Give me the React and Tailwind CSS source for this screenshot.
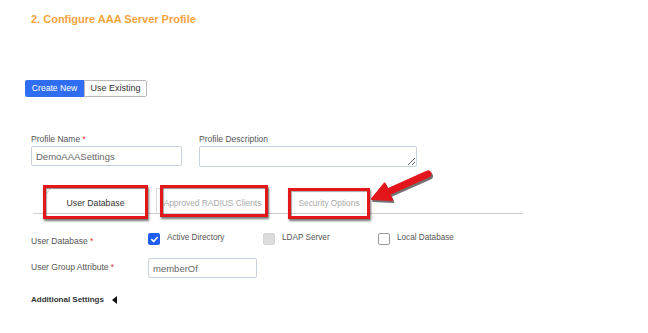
import React from "react";

function RedBox({ className }) {
  return (
    <div
      className={
        "absolute border-[3px] border-[#e3161b] shadow-[1px_2px_2px_rgba(0,0,0,0.55),inset_1px_1px_1px_rgba(0,0,0,0.35)] pointer-events-none " +
        className
      }
    />
  );
}

function Check({ kind }) {
  if (kind === "on")
    return (
      <span className="block w-[12px] h-[12px] rounded-[2px] bg-[#1f5ef2] flex items-center justify-center">
        <svg width="9" height="9" viewBox="0 0 10 10">
          <path d="M2 5.2 L4.1 7.2 L8 2.8" fill="none" stroke="#fff" strokeWidth="1.8" strokeLinecap="round" strokeLinejoin="round" />
        </svg>
      </span>
    );
  if (kind === "disabled")
    return <span className="block w-[12px] h-[12px] rounded-[2px] bg-[#dcdcdc] border border-[#d4d4d4]" />;
  return <span className="block w-[12px] h-[12px] rounded-[2px] bg-white border border-[#9a9a9a]" />;
}

export default function App() {
  return (
    <div
      className="relative w-[648px] h-[333px] bg-white overflow-hidden pl-[31px] flex flex-col text-[#555]"
      style={{ fontFamily: '"Liberation Sans", Arial, sans-serif' }}
    >
      <div className="mt-[13px] text-[11px] leading-[13px] font-bold text-[#f5a33f]">
        2. Configure AAA Server Profile
      </div>

      <div className="mt-[54px] ml-[-6px] flex h-[17px]">
        <div className="w-[59px] h-[17px] bg-[#2f6ef2] text-white text-[8.6px] flex items-center justify-center rounded-l-[2px]">
          Create New
        </div>
        <div className="w-[63px] h-[17px] bg-white border border-[#b8b8b8] text-[#333] text-[9px] flex items-center justify-center rounded-r-[2px]">
          Use Existing
        </div>
      </div>

      <div className="mt-[37px] flex gap-[17px]">
        <div className="flex flex-col">
          <div className="text-[8.5px] leading-[11px] text-[#555]">
            Profile Name <span className="text-[#e33]">*</span>
          </div>
          <input
            readOnly
            value="DemoAAASettings"
            className="mt-[1px] w-[151px] h-[20px] border border-[#c8d2de] rounded-[2px] px-[4px] text-[9.5px] text-[#666] outline-none"
          />
        </div>
        <div className="flex flex-col">
          <div className="text-[8.5px] leading-[11px] text-[#555]">Profile Description</div>
          <textarea
            readOnly
            className="mt-[1px] w-[218px] h-[21px] border border-[#c8d2de] rounded-[2px] outline-none block"
          />
        </div>
      </div>

      <div className="mt-[19px] ml-[2px] w-[490px] h-[28px] border-b border-[#cfcfcf] flex items-end">
        <div className="relative ml-[12px] w-[101px] h-[25px] bg-white border border-b-0 border-[#cfcfcf] flex items-end justify-center pb-[4px] text-[8.7px] leading-[11px] text-[#333]">
          <svg className="absolute left-[-1px] top-[-1px]" width="8" height="8" viewBox="0 0 8 8">
            <path d="M0 8 L0 7 L6 0 L8 0" fill="#fff" stroke="#cfcfcf" strokeWidth="1" />
          </svg>
          User Database
          <RedBox className="left-[-3px] right-[-3px] top-[-4px] bottom-[-6px]" />
        </div>
        <div className="relative ml-[10px] w-[113px] h-[25px] bg-white border border-b-0 border-[#dcdcdc] flex items-end justify-center pb-[4px] text-[8.4px] leading-[11px] text-[#aaa]">
          Approved RADIUS Clients
          <RedBox className="left-[3px] right-[0px] top-[-4px] bottom-[-4px]" />
        </div>
        <div className="relative ml-[19px] w-[82px] h-[25px] bg-white flex items-end justify-center pb-[4px] text-[8.3px] leading-[11px] text-[#aaa]">
          Security Options
          <RedBox className="left-[0px] right-[0px] top-[0px] bottom-[-6px]" />
        </div>
      </div>

      <div className="mt-[18px] flex h-[14px]">
        <div className="w-[117px] mt-[4px] text-[8.5px] leading-[11px]">
          User Database <span className="text-[#e33]">*</span>
        </div>
        <div className="w-[115px] flex items-start gap-[7px]">
          <span className="mt-[1px]"><Check kind="on" /></span>
          <span className="text-[8.2px] leading-[11px] text-[#555]">Active Directory</span>
        </div>
        <div className="w-[115px] flex items-start gap-[7px]">
          <span className="mt-[1px]"><Check kind="disabled" /></span>
          <span className="text-[8.2px] leading-[11px] text-[#555]">LDAP Server</span>
        </div>
        <div className="w-[115px] flex items-start gap-[7px]">
          <span className="mt-[1px]"><Check kind="off" /></span>
          <span className="text-[8.2px] leading-[11px] text-[#555]">Local Database</span>
        </div>
      </div>

      <div className="mt-[12px] flex">
        <div className="w-[117px] mt-[4px] text-[8.5px] leading-[11px]">
          User Group Attribute <span className="text-[#e33]">*</span>
        </div>
        <input
          readOnly
          value="memberOf"
          className="w-[109px] h-[20px] border border-[#c8d2de] rounded-[2px] px-[4px] text-[9.5px] text-[#666] outline-none"
        />
      </div>

      <div className="mt-[16px] flex items-center gap-[8px] text-[8px] leading-[11px] font-bold text-[#333]">
        Additional Settings
        <svg width="5" height="8" viewBox="0 0 5 8">
          <path d="M5 0 L0 4 L5 8 Z" fill="#111" />
        </svg>
      </div>

      <svg className="absolute left-[365px] top-[165px]" width="72" height="46" viewBox="0 0 72 46">
        <g transform="translate(1.2 2)" opacity="0.55">
          <line x1="23.4" y1="26.7" x2="63" y2="9" stroke="#000" strokeWidth="7.5" strokeLinecap="round" />
          <path d="M7 34 L19.7 18.5 L27.1 34.9 Z" fill="#000" stroke="#000" strokeWidth="2" strokeLinejoin="round" />
        </g>
        <line x1="23.4" y1="26.7" x2="63" y2="9" stroke="#e3161b" strokeWidth="7" strokeLinecap="round" />
        <path d="M7 34 L19.7 18.5 L27.1 34.9 Z" fill="#e3161b" stroke="#e3161b" strokeWidth="2" strokeLinejoin="round" />
      </svg>
    </div>
  );
}
